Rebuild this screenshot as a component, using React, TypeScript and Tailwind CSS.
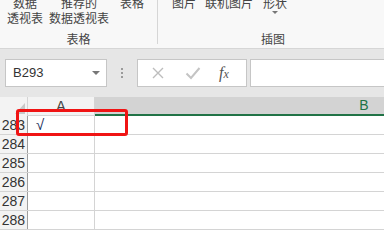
import React from 'react';

const cjk = '"Microsoft YaHei", "Noto Sans CJK SC", sans-serif';
const num = '"Liberation Sans", Arial, sans-serif';

const ROWS = [283, 284, 285, 286, 287, 288];

function RibbonButton({ lines, width, caret }: { lines: string[]; width: string; caret?: boolean }) {
  return (
    <div className={`flex flex-col items-center ${width}`}>
      {lines.map((l, i) => (
        <div key={i} className="leading-[15px] whitespace-nowrap">{l}</div>
      ))}
      {caret && (
        <div className="mt-[1px] w-0 h-0 border-l-[3px] border-r-[3px] border-t-[3px] border-l-transparent border-r-transparent border-t-[#777]" />
      )}
    </div>
  );
}

export default function App() {
  return (
    <div className="w-[384px] h-[234px] overflow-hidden bg-white text-[#333]" style={{ fontFamily: cjk }}>
      {/* Ribbon */}
      <div className="h-[49px] bg-[#f8f8f8] border-b border-[#d6d6d6] flex overflow-hidden text-[12px] text-[#444]">
        <div className="w-[157px] flex flex-col">
          <div className="flex mt-[-5px] h-[36px]">
            <RibbonButton lines={['数据', '透视表']} width="w-[50px]" />
            <RibbonButton lines={['推荐的', '数据透视表']} width="w-[58px]" />
            <RibbonButton lines={['表格']} width="w-[48px]" />
          </div>
          <div className="text-center leading-[15px]">表格</div>
        </div>
        <div className="w-px h-[44px] bg-[#d6d6d6]" />
        <div className="flex-1 flex flex-col">
          <div className="flex mt-[-5px] h-[36px] pl-[10px]">
            <RibbonButton lines={['图片']} width="w-[32px]" />
            <RibbonButton lines={['联机图片']} width="w-[58px]" />
            <RibbonButton lines={['形状']} width="w-[34px]" caret />
          </div>
          <div className="leading-[15px] pl-[103px]">插图</div>
        </div>
      </div>

      {/* Formula bar */}
      <div className="h-[48px] bg-[#e6e6e6] flex items-start pt-[10px] pl-[5px]">
        <div className="w-[102px] h-[28px] bg-white border border-[#c6c6c6] flex items-center justify-between pl-[7px] pr-[6px]">
          <span className="text-[13px] text-[#333]" style={{ fontFamily: num }}>B293</span>
          <span className="w-0 h-0 border-l-[4px] border-r-[4px] border-t-[4px] border-l-transparent border-r-transparent border-t-[#777]" />
        </div>
        <div className="w-[30px] h-[28px] flex flex-col items-center justify-center gap-[2px]">
          <span className="w-[2px] h-[2px] bg-[#9a9a9a]" />
          <span className="w-[2px] h-[2px] bg-[#9a9a9a]" />
          <span className="w-[2px] h-[2px] bg-[#9a9a9a]" />
        </div>
        <div className="w-[110px] h-[28px] bg-white border border-[#c6c6c6] flex items-center">
          <svg width="14" height="14" viewBox="0 0 14 14" className="ml-[13px]">
            <path d="M2 2 L12 12 M12 2 L2 12" stroke="#bdbdbd" strokeWidth="1.4" fill="none" />
          </svg>
          <svg width="16" height="14" viewBox="0 0 16 14" className="ml-[20px]">
            <path d="M1.5 7.5 L6 12 L14.5 2" stroke="#c4c4c4" strokeWidth="2" fill="none" />
          </svg>
          <span className="ml-[18px] text-[16px] italic text-[#555]" style={{ fontFamily: '"Liberation Serif", serif' }}>
            f<span className="text-[12px]">x</span>
          </span>
        </div>
        <div className="ml-[3px] flex-1 h-[28px] bg-white border border-[#c6c6c6] border-r-0" />
      </div>

      {/* Grid */}
      <div className="relative">
        <div className="flex h-[19px] bg-[#f3f3f3]" style={{ fontFamily: num }}>
          <div className="w-[28px] shrink-0 border-r border-[#d4d4d4] relative">
            <svg width="10" height="11" className="absolute right-[2px] bottom-[2px]">
              <path d="M10 0 L10 11 L0 11 Z" fill="#c8c8c8" />
            </svg>
          </div>
          <div className="w-[67px] shrink-0 border-r border-[#d4d4d4] border-b border-b-[#d4d4d4] flex items-center justify-center text-[14px] text-[#444]">A</div>
          <div className="w-[538px] shrink-0 bg-[#d3d3d3] border-b-2 border-[#217346] flex items-center justify-center text-[14px] text-[#217346]">B</div>
        </div>
        {ROWS.map(r => (
          <div key={r} className="flex h-[19px] border-b border-[#d4d4d4]" style={{ fontFamily: num }}>
            <div className="w-[28px] shrink-0 bg-[#f3f3f3] border-r border-[#9e9e9e] flex items-center justify-end pr-[2px] text-[14px] text-[#333]">{r}</div>
            <div className="w-[67px] shrink-0 border-r border-[#d4d4d4] flex items-center pl-[8px] text-[15px] text-[#1a2e5a]">
              {r === 283 ? '√' : ''}
            </div>
            <div className="flex-1" />
          </div>
        ))}
        <div className="absolute left-[16px] top-[12px] w-[112px] h-[27px] border-[3px] border-[#f01414] rounded-[3px]" />
      </div>
    </div>
  );
}
